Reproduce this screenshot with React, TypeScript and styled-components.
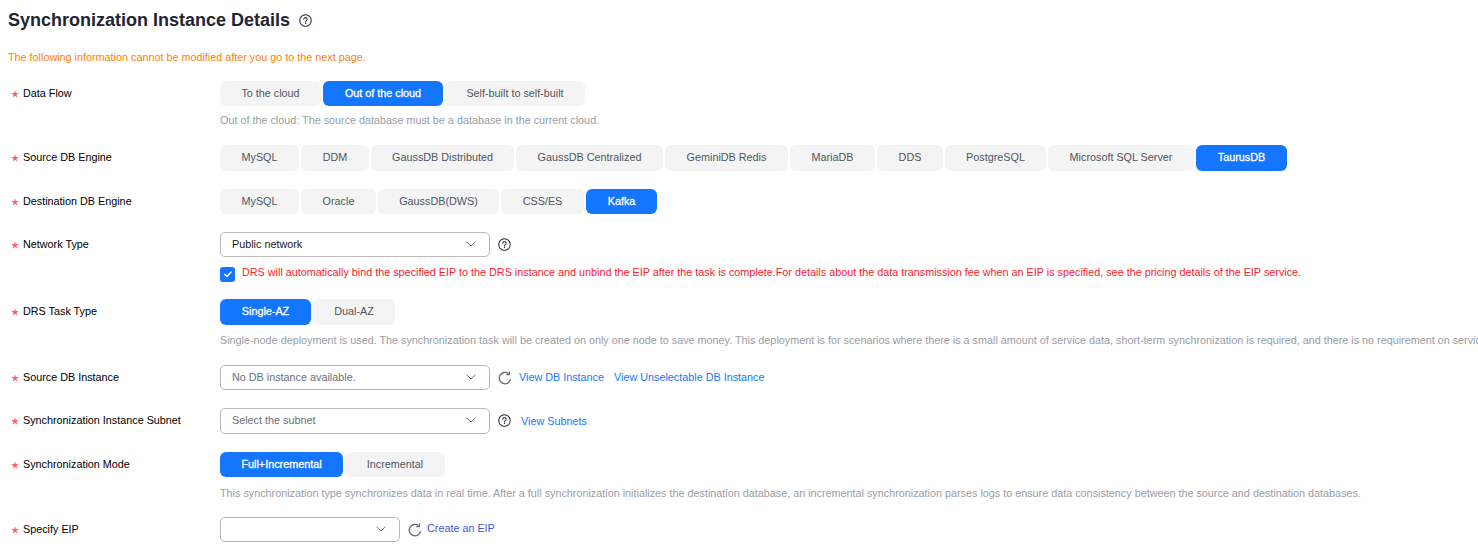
import React from "react";
import styled, { createGlobalStyle } from "styled-components";

const Global = createGlobalStyle`
  html, body { margin: 0; padding: 0; background: #fff; overflow: hidden; }
  body { font-family: "Liberation Sans", Arial, sans-serif; }
`;
const Page = styled.div`
  width: 1478px; height: 546px; overflow: hidden; padding: 11px 0 0 8px; box-sizing: border-box;
`;
const TitleRow = styled.div`
  display: flex; align-items: center; gap: 9px; height: 18px; color: #252b3a;
`;
const Title = styled.h1`
  margin: 0; font-size: 18px; line-height: 18px; font-weight: 700; color: #1f2533;
`;
const Notice = styled.div`
  margin-top: 21px; height: 14px; font-size: 10.8px; line-height: 14px; color: #ff7f00; margin-bottom: 17px;
`;
const Row = styled.div<{ $h: number; $mb: number }>`
  display: grid; grid-template-columns: 212px 1fr; height: ${(p) => p.$h}px; margin-bottom: ${(p) => p.$mb}px;
`;
const Label = styled.div`
  display: flex; align-items: flex-start; gap: 4px; height: 25px; padding-left: 3px;
  font-size: 10.8px; line-height: 24px; color: #000; white-space: nowrap;
`;
const Star = styled.svg`
  width: 8px; height: 8px; margin-top: 9px; flex: none;
`;
const Body = styled.div`
  display: flex; flex-direction: column; align-items: flex-start; min-width: 0;
`;
const Line = styled.div`
  display: flex; align-items: center; height: 25px; white-space: nowrap;
`;
const Group = styled.div`
  display: flex; gap: 2px;
`;
const Seg = styled.div<{ $on?: boolean; $w: number; $h: number }>`
  width: ${(p) => p.$w}px; height: ${(p) => p.$h}px; box-sizing: border-box; padding-bottom: 2px; border-radius: 6px;
  display: flex; align-items: center; justify-content: center;
  font-size: 10.8px; background: ${(p) => (p.$on ? "#1476ff" : "#f4f4f4")}; color: ${(p) => (p.$on ? "#fff" : "#4f5563")};
  -webkit-text-stroke: ${(p) => (p.$on ? "0.3px #fff" : "0")};
`;
const Hint = styled.div<{ $mt: number }>`
  margin-top: ${(p) => p.$mt}px; font-size: 10.8px; line-height: 13px; color: #9a9da6; white-space: nowrap;
`;
const Select = styled.div<{ $w: number; $h?: number; $muted?: boolean }>`
  width: ${(p) => p.$w}px; height: ${(p) => p.$h ?? 25}px; flex: none; box-sizing: border-box; border: 1px solid #b8b8b8; border-radius: 5px;
  display: flex; align-items: center; justify-content: space-between; padding: 0 12px 2px 11px;
  font-size: 10.8px; color: ${(p) => (p.$muted ? "#6b6f78" : "#191919")};
`;
const LinkText = styled.a<{ $violet?: boolean; $mb: number }>`
  font-size: 10.8px; margin-bottom: ${(p) => p.$mb}px; color: ${(p) => (p.$violet ? "#3f56d6" : "#1476ff")}; white-space: nowrap;
`;
const IconSlot = styled.span<{ $ml: number; $mr?: number }>`
  display: inline-flex; margin-left: ${(p) => p.$ml}px; margin-right: ${(p) => p.$mr ?? 0}px; color: #252b3a;
`;
const CheckLine = styled.div`
  display: flex; align-items: center; margin-top: 9px; height: 16px; gap: 7px;
`;
const CheckBox = styled.span`
  width: 15px; height: 15px; border-radius: 3px; background: #1476ff; display: inline-flex; align-items: center; justify-content: center;
`;
const Warn = styled.span`
  font-size: 10.8px; color: #f5222d; white-space: nowrap; margin-bottom: 5px;
`;

const Help = ({ s = 13 }: { s?: number }) => (
  <svg width={s} height={s} viewBox="0 0 14 14" fill="none" stroke="currentColor">
    <circle cx="7" cy="7" r="6.200" strokeWidth="1.1" />
    <path d="M5.200 5.600a1.800 1.800 0 1 1 2.800 1.500c-.6.4-1 .7-1 1.400" strokeWidth="1.100" strokeLinecap="round" />
    <circle cx="7" cy="10.200" r=".7" fill="currentColor" stroke="none" />
  </svg>
);
const Chevron = () => (
  <svg width="12" height="8" viewBox="0 0 12 8" fill="none" stroke="#707070" strokeWidth="1">
    <path d="M1.500 1.700 6 6l4.500-4.300" />
  </svg>
);
const Refresh = () => (
  <svg width="14" height="14" viewBox="0 0 14 14" fill="none" stroke="#6b6b6b" strokeWidth="1.300">
    <path d="M12.600 8A5.700 5.700 0 1 1 10.400 2.500" />
    <path d="M11.300.6v3.100h-3" />
  </svg>
);

const Req = ({ children }: { children: React.ReactNode }) => (
  <Label>
    <Star viewBox="0 0 10 10"><path d="M5 .4 6 3.900l3.800-.1-3 2.100L8 9.600 5 7.300 2 9.600l1.200-3.700-3-2.100 3.800.1z" fill="#f7646b" /></Star>
    {children}
  </Label>
);
type O = [string, number, boolean?];
const Segs = ({ items, h = 25 }: { items: O[]; h?: number }) => (
  <Group>{items.map(([t, w, on]) => <Seg key={t} $w={w} $h={h} $on={on}>{t}</Seg>)}</Group>
);

export default function App() {
  return (
    <Page>
      <Global />
      <TitleRow><Title>Synchronization Instance Details</Title><Help /></TitleRow>
      <Notice>The following information cannot be modified after you go to the next page.</Notice>
      <Row $h={47} $mb={17}>
        <Req>Data Flow</Req>
        <Body>
          <Segs items={[["To the cloud", 101], ["Out of the cloud", 120, true], ["Self-built to self-built", 140]]} />
          <Hint $mt={8}>Out of the cloud: The source database must be a database in the current cloud.</Hint>
        </Body>
      </Row>
      <Row $h={26} $mb={18}>
        <Req>Source DB Engine</Req>
        <Body>
          <Segs h={26} items={[["MySQL", 79], ["DDM", 68], ["GaussDB Distributed", 143], ["GaussDB Centralized", 147], ["GeminiDB Redis", 123], ["MariaDB", 85], ["DDS", 66], ["PostgreSQL", 101], ["Microsoft SQL Server", 146], ["TaurusDB", 91, true]]} />
        </Body>
      </Row>
      <Row $h={25} $mb={18}>
        <Req>Destination DB Engine</Req>
        <Body>
          <Segs items={[["MySQL", 79], ["Oracle", 75], ["GaussDB(DWS)", 121], ["CSS/ES", 83], ["Kafka", 71, true]]} />
        </Body>
      </Row>
      <Row $h={50} $mb={17}>
        <Req>Network Type</Req>
        <Body>
          <Line>
            <Select $w={270}>Public network<Chevron /></Select>
            <IconSlot $ml={8}><Help /></IconSlot>
          </Line>
          <CheckLine>
            <CheckBox>
              <svg width="10" height="10" viewBox="0 0 10 10" fill="none" stroke="#fff" strokeWidth="1.500"><path d="M1.500 5 4 7.500 8.500 2.500" /></svg>
            </CheckBox>
            <Warn>DRS will automatically bind the specified EIP to the DRS instance and unbind the EIP after the task is complete.For details about the data transmission fee when an EIP is specified, see the pricing details of the EIP service.</Warn>
          </CheckLine>
        </Body>
      </Row>
      <Row $h={48} $mb={18}>
        <Req>DRS Task Type</Req>
        <Body>
          <Segs h={26} items={[["Single-AZ", 91, true], ["Dual-AZ", 82]]} />
          <Hint $mt={9}>Single-node deployment is used. The synchronization task will be created on only one node to save money. This deployment is for scenarios where there is a small amount of service data, short-term synchronization is required, and there is no requirement on service reliability.</Hint>
        </Body>
      </Row>
      <Row $h={25} $mb={18}>
        <Req>Source DB Instance</Req>
        <Body>
          <Line>
            <Select $w={270} $muted>No DB instance available.<Chevron /></Select>
            <IconSlot $ml={8} $mr={7}><Refresh /></IconSlot>
            <LinkText $mb={2}>View DB Instance</LinkText>
            <IconSlot $ml={10} />
            <LinkText $mb={2}>View Unselectable DB Instance</LinkText>
          </Line>
        </Body>
      </Row>
      <Row $h={26} $mb={18}>
        <Req>Synchronization Instance Subnet</Req>
        <Body>
          <Line>
            <Select $w={270} $h={26} $muted>Select the subnet<Chevron /></Select>
            <IconSlot $ml={8} $mr={10}><Help /></IconSlot>
            <LinkText $mb={0}>View Subnets</LinkText>
          </Line>
        </Body>
      </Row>
      <Row $h={47} $mb={18}>
        <Req>Synchronization Mode</Req>
        <Body>
          <Segs items={[["Full+Incremental", 123, true], ["Incremental", 100]]} />
          <Hint $mt={10}>This synchronization type synchronizes data in real time. After a full synchronization initializes the destination database, an incremental synchronization parses logs to ensure data consistency between the source and destination databases.</Hint>
        </Body>
      </Row>
      <Row $h={25} $mb={0}>
        <Req>Specify EIP</Req>
        <Body>
          <Line>
            <Select $w={180}><span /><Chevron /></Select>
            <IconSlot $ml={8} $mr={5}><Refresh /></IconSlot>
            <LinkText $violet $mb={4}>Create an EIP</LinkText>
          </Line>
        </Body>
      </Row>
    </Page>
  );
}
